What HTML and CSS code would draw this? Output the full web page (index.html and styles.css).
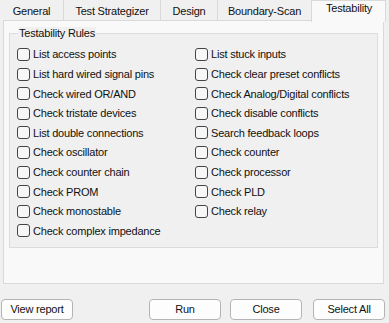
FILE: index.html
```html
<!DOCTYPE html>
<html>
<head>
<meta charset="utf-8">
<link rel="stylesheet" href="styles.css">
</head>
<body>
<div class="tabs">
  <div class="tab t-general">General</div>
  <div class="tab t-strat">Test Strategizer</div>
  <div class="tab t-design">Design</div>
  <div class="tab t-bscan">Boundary-Scan</div>
  <div class="tab active t-test">Testability</div>
</div>
<div class="panel">
  <div class="group">
    <span class="legend">Testability Rules</span>
    <div class="rules">
      <label class="rule"><span class="box"></span>List access points</label>
      <label class="rule"><span class="box"></span>List hard wired signal pins</label>
      <label class="rule"><span class="box"></span>Check wired OR/AND</label>
      <label class="rule"><span class="box"></span>Check tristate devices</label>
      <label class="rule"><span class="box"></span>List double connections</label>
      <label class="rule"><span class="box"></span>Check oscillator</label>
      <label class="rule"><span class="box"></span>Check counter chain</label>
      <label class="rule"><span class="box"></span>Check PROM</label>
      <label class="rule"><span class="box"></span>Check monostable</label>
      <label class="rule"><span class="box"></span>Check complex impedance</label>
      <label class="rule"><span class="box"></span>List stuck inputs</label>
      <label class="rule"><span class="box"></span>Check clear preset conflicts</label>
      <label class="rule"><span class="box"></span>Check Analog/Digital conflicts</label>
      <label class="rule"><span class="box"></span>Check disable conflicts</label>
      <label class="rule"><span class="box"></span>Search feedback loops</label>
      <label class="rule"><span class="box"></span>Check counter</label>
      <label class="rule"><span class="box"></span>Check processor</label>
      <label class="rule"><span class="box"></span>Check PLD</label>
      <label class="rule"><span class="box"></span>Check relay</label>
    </div>
  </div>
</div>
<div class="buttons">
  <div class="btn b-view">View report</div>
  <div class="btn b-run">Run</div>
  <div class="btn b-close">Close</div>
  <div class="btn b-sel">Select All</div>
</div>
</body>
</html>
```
FILE: styles.css
```css
* { box-sizing: border-box; }
html, body {
  margin: 0;
  padding: 0;
  background: #f0f0f0;
  font-family: "Liberation Sans", Arial, sans-serif;
  font-size: 11px;
  letter-spacing: -0.2px;
  color: #111;
}
body { width: 389px; height: 323px; overflow: hidden; }

.tabs {
  display: flex;
  height: 20px;
  position: relative;
  z-index: 1;
}
.tab {
  height: 20px;
  line-height: 23px;
  text-align: center;
  border-right: 1px solid #d9d9d9;
  background: #f0f0f0;
  white-space: nowrap;
}
.t-general { width: 64px; }
.t-strat { width: 97px; }
.t-design { width: 57px; }
.t-bscan { width: 94px; }
.tab.active {
  width: 75px;
  height: 22px;
  line-height: 15px;
  background: #f9f9f9;
  border-left: 1px solid #d9d9d9;
  border-top: 1px solid #d9d9d9;
  margin-left: -1px;
  padding-left: 1px;
}

.panel {
  margin-left: 3px;
  width: 381px;
  height: 264px;
  border: 1px solid #d9d9d9;
  background: #f9f9f9;
  padding: 12px 5px 0 5px;
}
.group {
  position: relative;
  width: 369px;
  height: 215px;
  border: 1px solid #dcdcdc;
  background: #f0f0f0;
  padding: 10.7px 0 0 7px;
}
.legend {
  position: absolute;
  top: -7px;
  left: 8px;
  padding: 0 1px;
  line-height: 13px;
  background: #f0f0f0;
}
.rules {
  display: grid;
  grid-template-columns: 178px 1fr;
  grid-template-rows: repeat(10, 19.6px);
  grid-auto-flow: column;
}
.rule {
  display: flex;
  align-items: center;
  gap: 3px;
  white-space: nowrap;
}
.box {
  width: 13px;
  height: 13px;
  border: 1px solid #444;
  border-radius: 3px;
  background: #f7f7f7;
  flex: none;
}

.buttons {
  display: flex;
  margin-top: 15px;
  padding-left: 1px;
}
.btn {
  width: 72px;
  height: 21px;
  border: 1px solid #b4b4b4;
  border-radius: 4px;
  background: #fdfdfd;
  text-align: center;
  line-height: 19px;
}
.b-run { margin-left: 76px; }
.b-close { margin-left: 9px; }
.b-sel { margin-left: 11px; }
```
